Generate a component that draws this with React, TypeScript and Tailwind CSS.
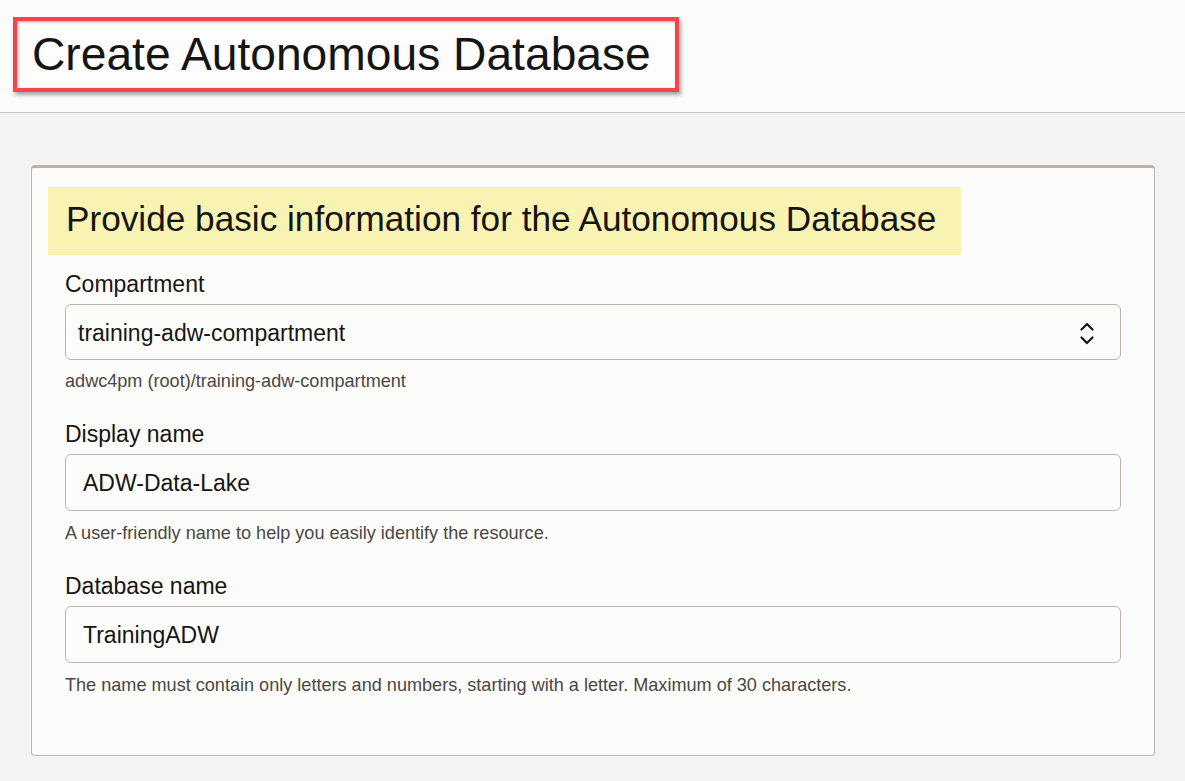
import React from "react";

function Field({
  label,
  value,
  helper,
  select,
}: {
  label: string;
  value: string;
  helper: string;
  select?: boolean;
}) {
  return (
    <div className="flex flex-col">
      <label className="text-[23px] leading-[28px] text-[#161513]">{label}</label>
      <div
        className={
          "mt-[6px] flex items-center rounded-[6px] border border-[#bab5af] bg-[#fcfcfb] " +
          (select ? "h-[56px] pl-[12px] pr-[26px] pt-[2px]" : "h-[57px] pl-[17px] pr-[17px] pt-[2px]")
        }
      >
        <span className="flex-1 text-[23px] text-[#161513]">{value}</span>
        {select && (
          <svg width="14" height="25" viewBox="0 0 14 25" fill="none" stroke="#161513" strokeWidth="2.2" strokeLinecap="round" strokeLinejoin="round">
            <polyline points="1.5,8.5 7,3 12.5,8.5" />
            <polyline points="1.5,16.5 7,22 12.5,16.5" />
          </svg>
        )}
      </div>
      <p className={"text-[18.1px] leading-[22px] text-[#4a4744] " + (select ? "mt-[10px]" : "mt-[11px]")}>{helper}</p>
    </div>
  );
}

export default function App() {
  return (
    <div
      className="min-h-[781px] w-full bg-[#f4f3f2]"
      style={{ fontFamily: '"Liberation Sans", Arial, sans-serif' }}
    >
      <header className="h-[113px] border-b border-[#c9c5c0] bg-[#fcfcfb] pl-[13px] pt-[17px]">
        <div className="inline-block border-4 border-[#f2464a] bg-[#fdfdfd] pl-[15px] pr-[24px] pt-[7px] pb-[8px] shadow-[2px_3px_4px_rgba(0,0,0,0.35),inset_1px_1px_3px_rgba(0,0,0,0.35)]">
          <h1 className="text-[46.2px] leading-[52px] text-[#161513]">Create Autonomous Database</h1>
        </div>
      </header>
      <main className="pl-[31px] pr-[30px] pt-[52px] pb-[26px]">
        <section className="rounded-[4px] border border-t-[3px] border-[#bcb7b1] border-t-[#b8b2ac] bg-[#fcfcfb] px-[16px] pt-[19px] pb-[59px]">
          <div className="w-[913px] bg-[#f8f3b3] pl-[18px] pt-[11px] pb-[15px]">
            <h2 className="text-[35.2px] leading-[42px] text-[#161513]">
              Provide basic information for the Autonomous Database
            </h2>
          </div>
          <div className="mt-[15px] flex flex-col gap-[28px] px-[17px]">
            <Field
              label="Compartment"
              value="training-adw-compartment"
              helper="adwc4pm (root)/training-adw-compartment"
              select
            />
            <Field
              label="Display name"
              value="ADW-Data-Lake"
              helper="A user-friendly name to help you easily identify the resource."
            />
            <Field
              label="Database name"
              value="TrainingADW"
              helper="The name must contain only letters and numbers, starting with a letter. Maximum of 30 characters."
            />
          </div>
        </section>
      </main>
    </div>
  );
}
